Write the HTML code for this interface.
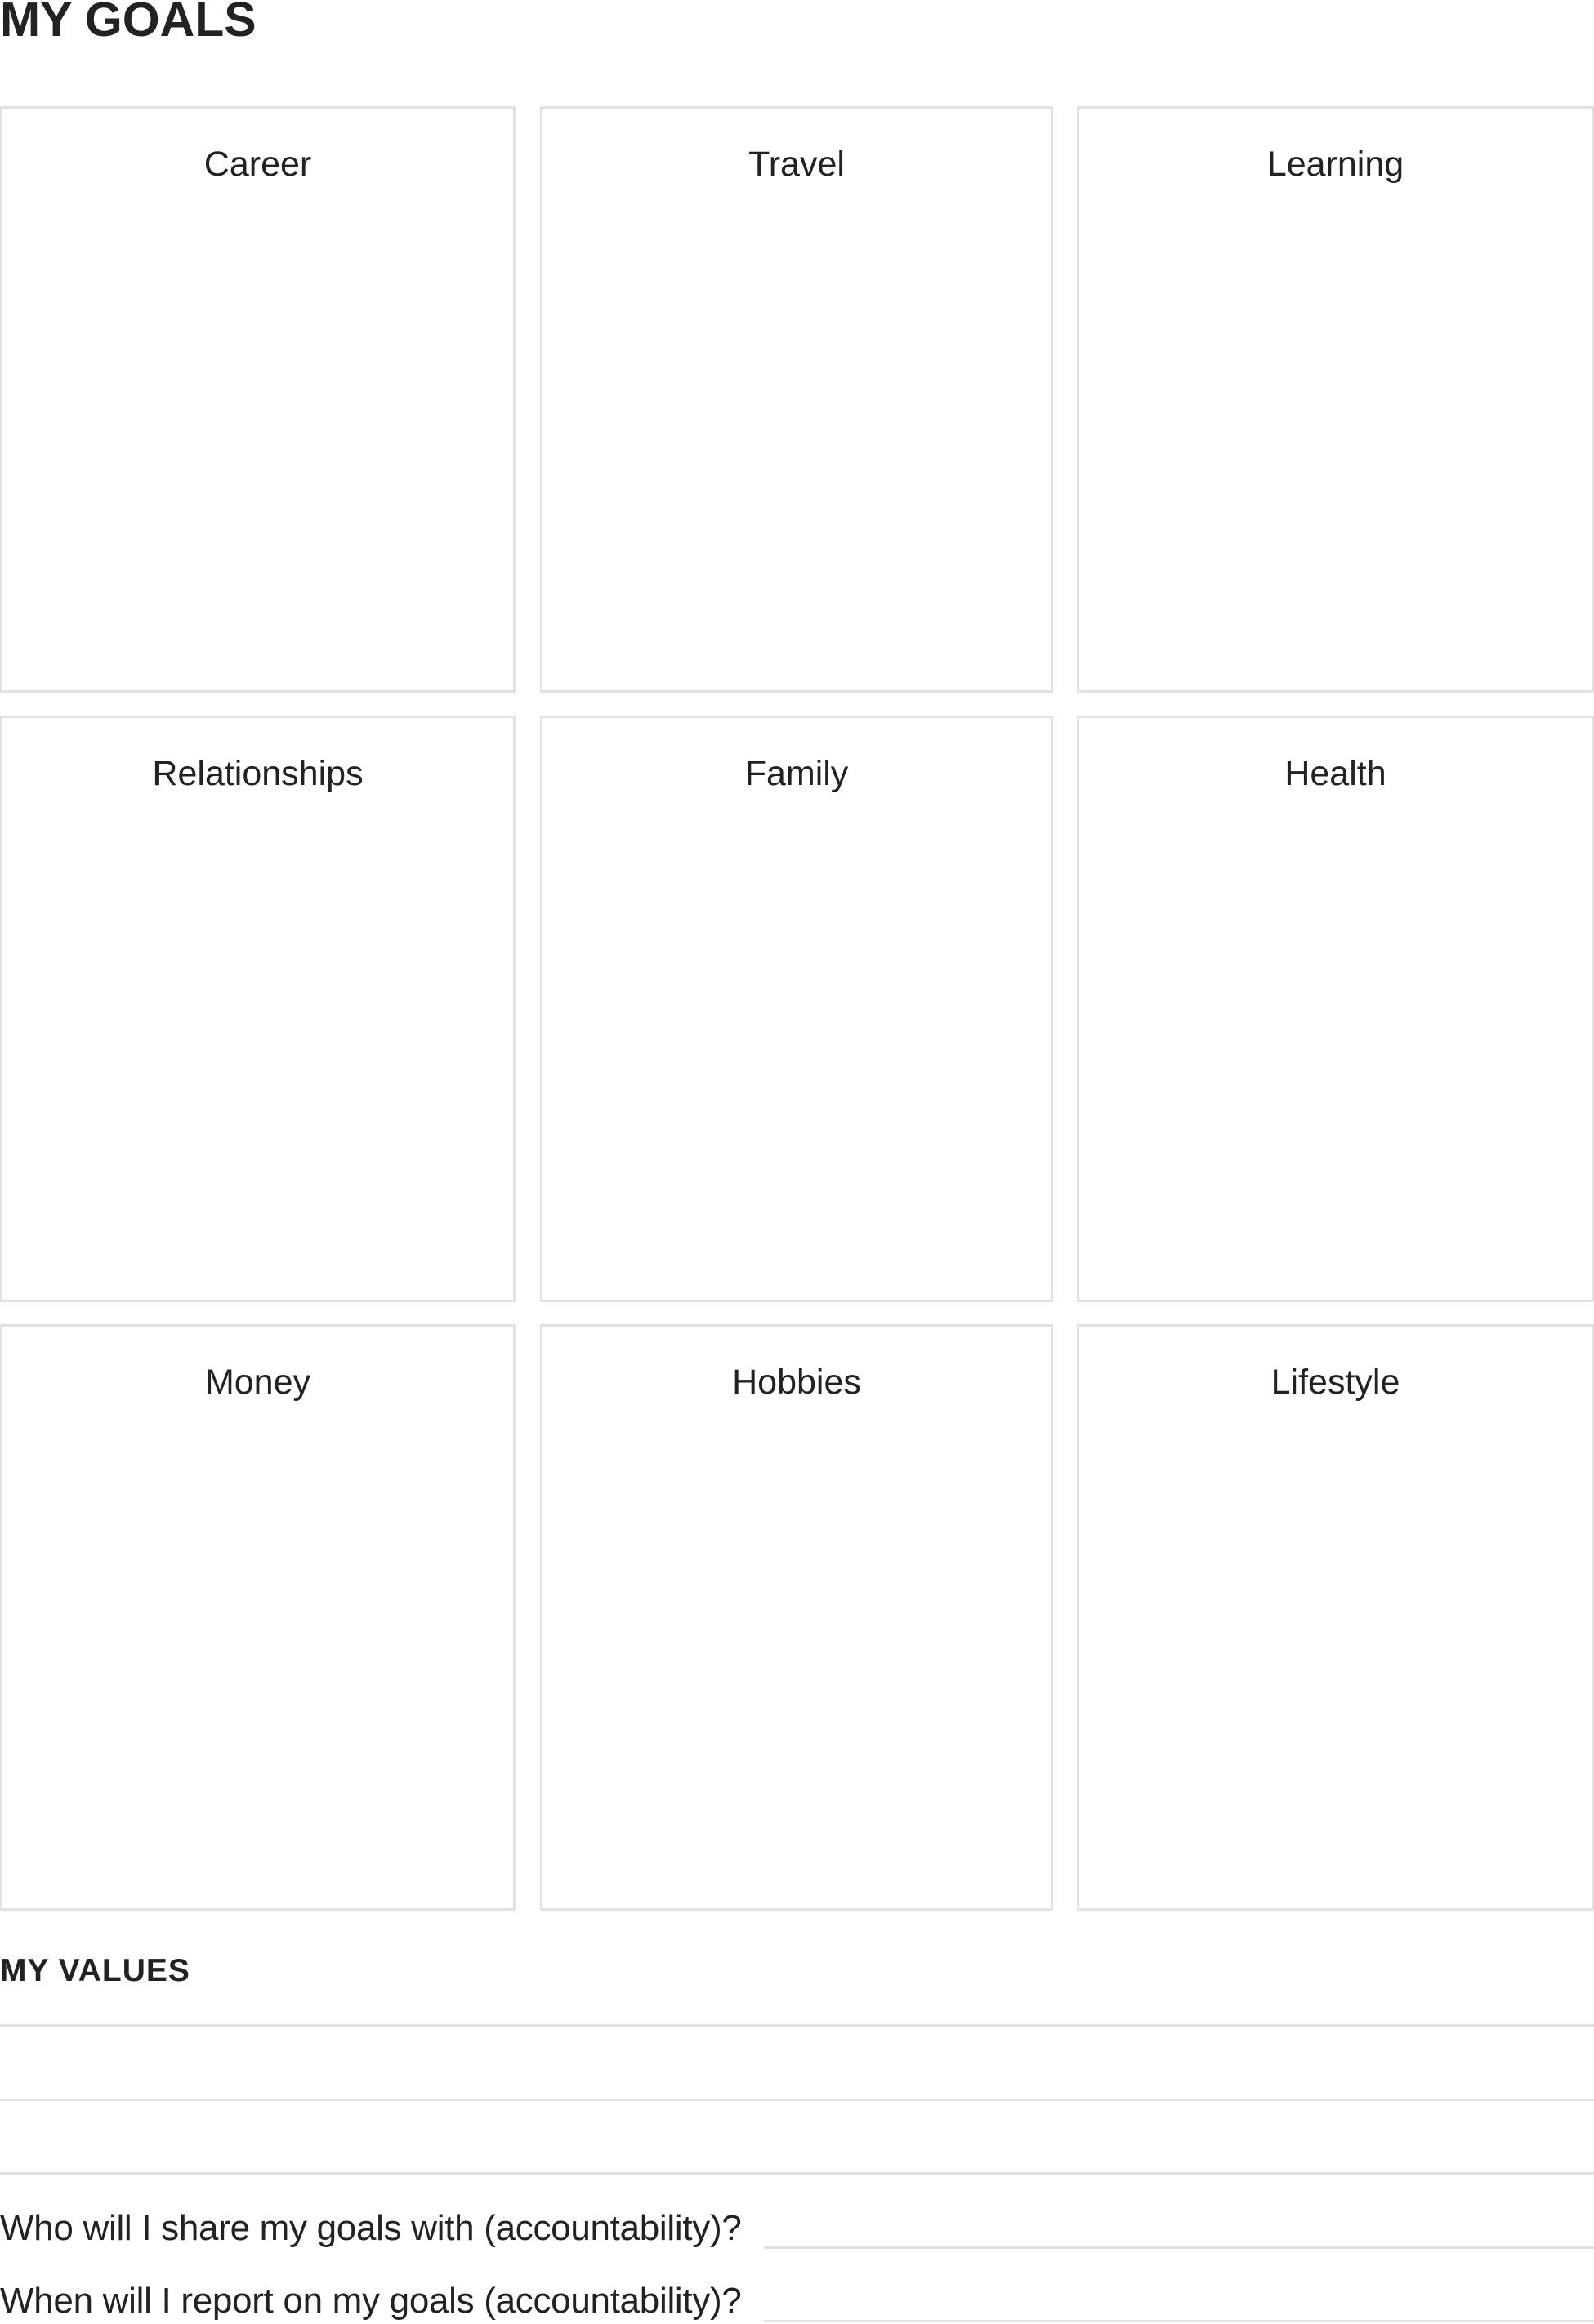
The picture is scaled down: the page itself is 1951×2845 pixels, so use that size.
<!DOCTYPE html>
<html><head><meta charset="utf-8"><style>
body{margin:0;width:1951px;height:2845px;background:#fff;position:relative;overflow:hidden;font-family:"Liberation Sans",sans-serif;color:#222}
.t{position:absolute;left:0;top:-6px;font-size:59px;font-weight:bold;letter-spacing:0px;line-height:60px}
.b{position:absolute;border:3px solid #e2e2e2;box-sizing:border-box}
.b span{position:absolute;left:0;right:0;top:44px;text-align:center;font-size:43px;line-height:48px}
.l{position:absolute;height:3px;background:#e2e2e2}
.q{position:absolute;left:0;font-size:44px;line-height:48px;letter-spacing:-0.3px}
</style></head><body>
<div class="t">MY GOALS</div>
<div class="b" style="left:0;top:130px;width:631px;height:718px"><span>Career</span></div>
<div class="b" style="left:661px;top:130px;width:628px;height:718px"><span>Travel</span></div>
<div class="b" style="left:1318px;top:130px;width:633px;height:718px"><span>Learning</span></div>
<div class="b" style="left:0;top:876px;width:631px;height:718px"><span>Relationships</span></div>
<div class="b" style="left:661px;top:876px;width:628px;height:718px"><span>Family</span></div>
<div class="b" style="left:1318px;top:876px;width:633px;height:718px"><span>Health</span></div>
<div class="b" style="left:0;top:1621px;width:631px;height:718px"><span>Money</span></div>
<div class="b" style="left:661px;top:1621px;width:628px;height:718px"><span>Hobbies</span></div>
<div class="b" style="left:1318px;top:1621px;width:633px;height:718px"><span>Lifestyle</span></div>
<div style="position:absolute;left:0;top:2390px;font-size:39px;font-weight:bold;line-height:46px;letter-spacing:1px">MY VALUES</div>
<div class="l" style="left:0;top:2478px;width:1951px"></div>
<div class="l" style="left:0;top:2569px;width:1951px"></div>
<div class="l" style="left:0;top:2659px;width:1951px"></div>
<div class="q" style="top:2704px">Who will I share my goals with (accountability)?</div>
<div class="l" style="left:935px;top:2750px;width:1016px"></div>
<div class="q" style="top:2793px">When will I report on my goals (accountability)?</div>
<div class="l" style="left:935px;top:2840px;width:1016px"></div>
</body></html>
